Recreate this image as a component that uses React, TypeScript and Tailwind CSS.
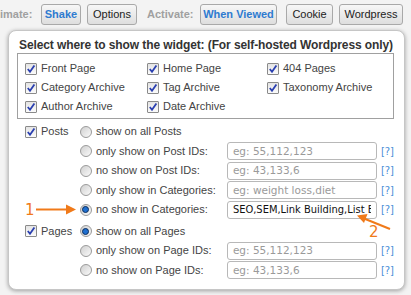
import React from "react";

const labelFont = "font-['Liberation_Sans',Arial,sans-serif]";

function Check() {
  return (
    <span className="inline-flex w-[12px] h-[12px] shrink-0 items-center justify-center border border-[#8a8a8a] bg-gradient-to-b from-[#e4e4e4] to-[#fbfbfb] rounded-[1px]">
      <svg width="10" height="10" viewBox="0 0 10 10">
        <path d="M1.8 5 L4 7.8 L8.4 1.6" fill="none" stroke="#2a3fb0" strokeWidth="1.8" />
      </svg>
    </span>
  );
}

function Radio({ on = false }: { on?: boolean }) {
  return (
    <span className="inline-flex w-[12px] h-[12px] shrink-0 items-center justify-center rounded-full border border-[#9a9a9a] bg-gradient-to-br from-[#d0d0d0] to-[#fafafa]">
      {on && (
        <span className="w-[7px] h-[7px] rounded-full bg-[#1f6fd0] border border-[#0b2d5c]" />
      )}
    </span>
  );
}

function CheckItem({ label }: { label: string }) {
  return (
    <div className="flex items-center gap-[4px] h-[19px]">
      <Check />
      <span className="text-[11px] leading-[13px] text-[#444]">{label}</span>
    </div>
  );
}

function Input({ value, placeholder }: { value?: string; placeholder?: string }) {
  return (
    <div className="w-[150px] h-[18px] border border-[#b8b8b8] rounded-[3px] bg-white flex items-center px-[5px] overflow-hidden whitespace-nowrap">
      {value ? (
        <span className="block w-full overflow-hidden text-[#111] text-[11px] leading-[13px] font-['DejaVu_Sans_Condensed','DejaVu_Sans',sans-serif] [font-stretch:condensed]">
          {value}
        </span>
      ) : (
        <span className="text-[#9a9a9a] text-[10.5px] leading-[13px] font-['DejaVu_Sans',sans-serif]">
          {placeholder}
        </span>
      )}
    </div>
  );
}

type Row = { label: string; on?: boolean; input?: { value?: string; placeholder?: string } };

function OptionGroup({ title, rows }: { title: string; rows: Row[] }) {
  return (
    <div className="flex">
      <div className="w-[63px] pl-[8px] flex items-center gap-[4px] h-[19.5px] self-start">
        <Check />
        <span className="text-[11px] leading-[13px] text-[#444]">{title}</span>
      </div>
      <div className="flex flex-col">
        {rows.map((r, i) => (
          <div key={i} className="flex items-center h-[19.5px]">
            <div className="w-[147px] flex items-center gap-[4px]">
              <Radio on={r.on} />
              <span className="text-[11px] leading-[13px] text-[#444] whitespace-nowrap">{r.label}</span>
            </div>
            {r.input && (
              <>
                <Input value={r.input.value} placeholder={r.input.placeholder} />
                <span className="ml-[4px] text-[10px] leading-[13px] text-[#4a8fd8] font-['DejaVu_Sans',sans-serif]">
                  [?]
                </span>
              </>
            )}
          </div>
        ))}
      </div>
    </div>
  );
}

function ToolButton({ children, blue = false, w }: { children: React.ReactNode; blue?: boolean; w: string }) {
  return (
    <div
      className={`${w} h-[21px] flex items-center justify-center rounded-[3px] border border-[#a9a9a9] bg-gradient-to-b from-[#f7f7f7] to-[#dedede] text-[11px] leading-[13px] whitespace-nowrap ${
        blue ? "text-[#2f7bd0] font-bold" : "text-[#222]"
      }`}
    >
      {children}
    </div>
  );
}

export default function App() {
  return (
    <div className={`relative w-[411px] h-[295px] overflow-hidden bg-[#f3f3f3] ${labelFont}`}>
      {/* toolbar */}
      <div className="flex items-center h-[21px] mt-[4px]">
        <span className="w-[41px] text-[11px] leading-[13px] font-bold text-[#a0a0a0] whitespace-nowrap">imate:</span>
        <ToolButton blue w="w-[40px]">Shake</ToolButton>
        <div className="w-[6px]" />
        <ToolButton w="w-[50px]">Options</ToolButton>
        <span className="w-[63px] pl-[10px] text-[11px] leading-[13px] font-bold text-[#a0a0a0]">Activate:</span>
        <ToolButton blue w="w-[77px]">When Viewed</ToolButton>
        <div className="w-[9px]" />
        <ToolButton w="w-[47px]">Cookie</ToolButton>
        <div className="w-[6px]" />
        <ToolButton w="w-[64px]">Wordpress</ToolButton>
      </div>

      {/* dialog */}
      <div className="absolute left-[8px] top-[30px] w-[397px] h-[260px] bg-white rounded-[8px] border border-[#c6c6c6] shadow-[0_1px_4px_rgba(0,0,0,0.35)] pl-[8px] pr-[10px]">
        <div className="pt-[7px] pl-[2px] text-[12px] leading-[14px] font-bold text-[#333] whitespace-nowrap tracking-[-0.1px]">
          Select where to show the widget: (For self-hosted Wordpress only)
        </div>
        <div className="mt-[1px] w-[377px] h-[66px] border border-[#a0a0a0] grid grid-cols-[122px_120px_auto] content-start pl-[7px] pt-[5px]">
          <CheckItem label="Front Page" />
          <CheckItem label="Home Page" />
          <CheckItem label="404 Pages" />
          <CheckItem label="Category Archive" />
          <CheckItem label="Tag Archive" />
          <CheckItem label="Taxonomy Archive" />
          <CheckItem label="Author Archive" />
          <CheckItem label="Date Archive" />
        </div>

        <div className="mt-[3px] flex flex-col gap-[2px]">
          <OptionGroup
            title="Posts"
            rows={[
              { label: "show on all Posts" },
              { label: "only show on Post IDs:", input: { placeholder: "eg: 55,112,123" } },
              { label: "no show on Post IDs:", input: { placeholder: "eg: 43,133,6" } },
              { label: "only show in Categories:", input: { placeholder: "eg: weight loss,diet" } },
              { label: "no show in Categories:", on: true, input: { value: "SEO,SEM,Link Building,List Building" } },
            ]}
          />
          <OptionGroup
            title="Pages"
            rows={[
              { label: "show on all Pages", on: true },
              { label: "only show on Page IDs:", input: { placeholder: "eg: 55,112,123" } },
              { label: "no show on Page IDs:", input: { placeholder: "eg: 43,133,6" } },
            ]}
          />
        </div>
      </div>

      {/* annotations */}
      <span className="absolute left-[25px] top-[203px] text-[15px] leading-[15px] text-[#f07a1a] font-['DejaVu_Sans',sans-serif]">1</span>
      <span className="absolute left-[369px] top-[225px] text-[15px] leading-[15px] text-[#f07a1a] font-['DejaVu_Sans',sans-serif]">2</span>
      <svg className="absolute left-0 top-0 pointer-events-none" width="411" height="295">
        <line x1="36" y1="209.5" x2="68" y2="209.5" stroke="#f07a1a" strokeWidth="2" />
        <polygon points="76,209.5 66,204.5 66,214.5" fill="#f07a1a" />
        <line x1="390" y1="229" x2="364" y2="218.5" stroke="#f07a1a" strokeWidth="2" />
        <polygon points="357,215.5 367.5,214 364,223" fill="#f07a1a" />
      </svg>
    </div>
  );
}
